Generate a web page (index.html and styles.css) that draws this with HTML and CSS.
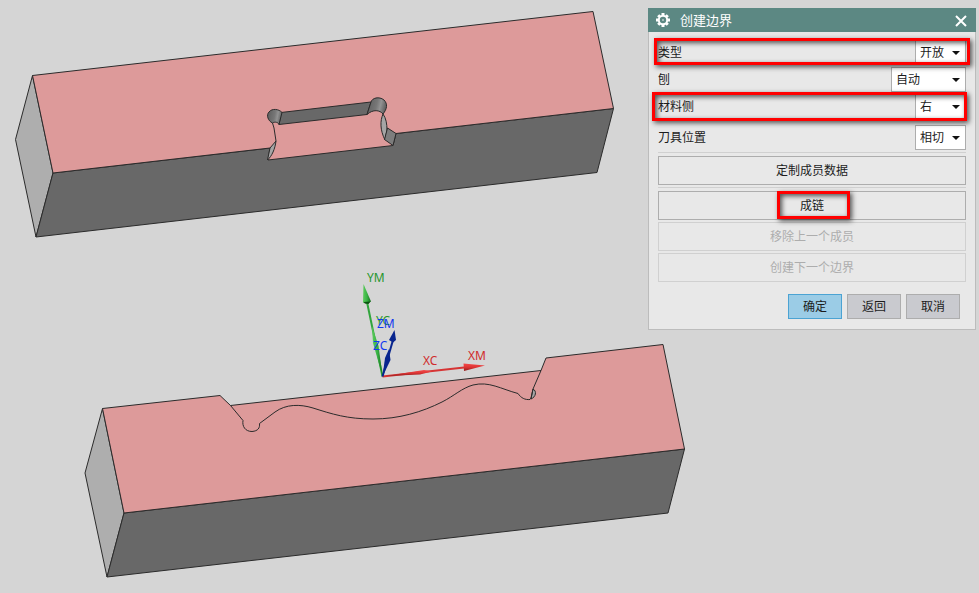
FILE: index.html
```html
<!DOCTYPE html>
<html lang="zh-CN">
<head>
<meta charset="utf-8">
<meta name="viewport" content="width=device-width, initial-scale=1">
<title>创建边界</title>
<link rel="stylesheet" href="styles.css">
</head>
<body>
<main class="workspace">
  <svg class="viewport" viewBox="0 0 979 593" preserveAspectRatio="xMinYMin meet" aria-hidden="true">
    <defs>
      <linearGradient id="bore" x1="0" x2="1" y1="0" y2="0.2">
        <stop offset="0" stop-color="#5c5c5c"/><stop offset=".55" stop-color="#777"/><stop offset=".75" stop-color="#929292"/><stop offset="1" stop-color="#656565"/>
      </linearGradient>
      <linearGradient id="green" x1="0" x2="1"><stop offset="0" stop-color="#5ccb5c"/><stop offset=".5" stop-color="#38b344"/><stop offset="1" stop-color="#146b1a"/></linearGradient>
      <linearGradient id="red" x1="0" x2="0" y1="0" y2="1"><stop offset="0" stop-color="#f34a4a"/><stop offset=".5" stop-color="#df3434"/><stop offset="1" stop-color="#8e1d1d"/></linearGradient>
    </defs>

    <!-- upper block -->
    <g class="solid">
      <path class="end" d="M32.500 75.500 15.500 139.500 36 237 53 173Z"/>
      <path class="side" d="M53 173 613.500 108.500 597 172.500 36 237Z"/>
      <path class="top" d="M32.500 75.500 593 11.500 613.500 108.500 396 133.500 393 145.500 268 160 270 148 53 173Z"/>
      <path class="wall" d="M281 112.500 371 102 367 114.500 279 124.500Z"/>
      <path class="bore" d="M279 124.500C278 122 275 121.500 272.500 123 268 121 266 115 269 112 272 108 279 109 282 112.500Z"/>
      <path class="bore" d="M367 114.500 371 102C372 98 379 96 384 100 388 104 387 109 383 114 380 110 373 109 367 114.500Z"/>
      <path class="light" d="M383 114C386 118 387 124 387 130L385 140C380 130 380 121 383 114Z"/>
      <path class="face" d="M387.500 128 396 133.500 393 145.500 384.500 139.500Z"/>
      <path class="light" d="M270 148 276 141C275 149 272 156 267.500 160Z"/>
      <path class="line" d="M272.500 123 274 128 276 141"/>
    </g>

    <!-- lower block -->
    <g class="solid">
      <path class="end" d="M102.500 408.500 85 473 107 577 124 513Z"/>
      <path class="side" d="M124 513 684.500 449 668 513 107 577Z"/>
      <path class="top" d="M102.500 408.500 220 395.500 230.500 405.500 541 370.500 546 358 663 344.500 684.500 449 124 513Z"/>
      <path class="light" d="M533 389C537 391 536 397 531 399Z"/>
      <path class="line" d="M230.500 405.500 243 420.500C242 426 245 431.500 252 431.500 258 431 260 428 259.500 423.500L275 412C286 404 300 404 313 408 332 414 347 419 373 419 399 419 422 412 442 402 454 396 462 388 473 385 489 381 501 389 518 393.500 521 398 525 400 530 399.500L531 398 533 389 541 370.500"/>
    </g>

    <!-- work and machine coordinate axes -->
    <g class="axes">
      <text class="y-label" x="376" y="325">YC</text>
      <path class="y-stem" d="M367 302 382.500 376.500"/>
      <path fill="url(#green)" d="M363.500 284 371 301.500 367 304 363 302.500Z"/>
      <path class="y-cap" d="M363.500 302 370.500 301.500 368.500 304 365 303.500Z"/>
      <path fill="url(#green)" d="M372 326 378.500 346 382.500 376 373 343Z"/>
      <path class="x-stem" d="M382.500 376.500 464 367.500"/>
      <path fill="url(#red)" d="M386 376 424 370 432 371.500 420 374.500Z"/>
      <path fill="url(#red)" d="M463.500 363.500 485 365.500 464 371Z"/>
      <path class="z-stem" d="M382.500 376.500 393 340"/>
      <path class="z-head" d="M394.500 330 396 340 393 342.500 389 340Z"/>
      <path class="z-head" d="M389 349 390.500 360 382.500 376.500 385 358Z"/>
      <text class="y-label" x="367" y="282">YM</text>
      <text class="z-label" x="377" y="328">ZM</text>
      <text class="z-label" x="373" y="350">ZC</text>
      <text class="x-label" x="423" y="365">XC</text>
      <text class="x-label" x="468" y="360">XM</text>
    </g>
  </svg>

  <form class="dialog" role="dialog" aria-labelledby="dialog-title">
    <header class="titlebar">
      <svg class="gear" viewBox="0 0 16 16" aria-hidden="true">
        <circle class="gear-ring" cx="8" cy="8" r="4.200"/>
        <path class="gear-teeth" d="M8 1V3.500M8 12.500V15M1 8H3.500M12.500 8H15M3.200 3.200 4.800 4.800M11.200 11.200 12.800 12.800M3.200 12.800 4.800 11.200M11.200 4.800 12.800 3.200"/>
        <circle class="gear-hub" cx="8" cy="8" r="1"/>
      </svg>
      <h1 class="title" id="dialog-title">创建边界</h1>
      <button class="close" type="button" aria-label="关闭">
        <svg viewBox="0 0 12 12" aria-hidden="true"><path d="M1 1 11 11M11 1 1 11"/></svg>
      </button>
    </header>
    <div class="content">
      <div class="fields">
        <div class="field marked marked-type">
          <label for="type">类型</label>
          <span class="picker"><select id="type"><option>开放</option></select></span>
        </div>
        <div class="field">
          <label for="plane">刨</label>
          <span class="picker picker-wide"><select id="plane"><option>自动</option></select></span>
        </div>
        <div class="field marked marked-side">
          <label for="side">材料侧</label>
          <span class="picker"><select id="side"><option>右</option></select></span>
        </div>
      </div>
      <div class="field">
        <label for="tool">刀具位置</label>
        <span class="picker"><select id="tool"><option>相切</option></select></span>
      </div>
      <div class="actions">
        <button class="action" type="button">定制成员数据</button>
      </div>
      <div class="actions">
        <button class="action marked marked-chain" type="button">成链</button>
        <button class="action" type="button" disabled>移除上一个成员</button>
        <button class="action" type="button" disabled>创建下一个边界</button>
      </div>
      <footer class="footer">
        <button class="command primary" type="button">确定</button>
        <button class="command" type="button">返回</button>
        <button class="command" type="button">取消</button>
      </footer>
    </div>
  </form>
</main>
</body>
</html>
```
FILE: styles.css
```css
* { box-sizing: border-box; }

body {
  margin: 0;
  background: #d5d5d5;
  color: #1c1c1c;
  font: 12px/16px "Noto Sans", "Noto Sans CJK SC", sans-serif;
}

button, select { font: inherit; color: inherit; }

.workspace { position: relative; min-height: 100vh; overflow: hidden; }
.viewport { display: block; width: 100%; height: 100vh; }

/* Model */
.solid { stroke: #2b2b2b; stroke-width: 1; stroke-linejoin: round; }
.top { fill: #dd9a9a; }
.side, .wall { fill: #686868; }
.end { fill: #aeaeae; }
.bore { fill: url(#bore); }
.light { fill: #a5a5a5; }
.face { fill: #7d7d7d; }
.line { fill: none; }

/* Axes */
.axes { font: 12px "Noto Sans", sans-serif; }
.y-stem, .x-stem, .z-stem { fill: none; stroke-width: 2; }
.y-stem { stroke: #31a53c; }
.x-stem { stroke: #d63434; }
.z-stem { stroke: #08258e; }
.y-cap { fill: #0c5312; }
.z-head { fill: #08258e; }
.y-label { fill: #27952d; }
.x-label { fill: #d02c2c; }
.z-label { fill: #1238f0; }

/* Dialog */
.dialog {
  position: absolute;
  top: 8px;
  right: 3px;
  width: 328px;
  background: #e8e8e8;
}
.titlebar {
  display: flex;
  align-items: center;
  gap: 9px;
  height: 24px;
  padding: 0 9px 0 7px;
  background: #5c8883;
  color: #fff;
}
.gear { width: 16px; height: 16px; fill: none; stroke: #fff; }
.gear-ring { stroke-width: 2; }
.gear-teeth { stroke-width: 3; }
.gear-hub { fill: #fff; stroke: none; opacity: .6; }
.title { flex: 1; margin: 0; font-size: 13px; font-weight: 400; }
.close {
  display: flex;
  padding: 2px 0 0;
  border: 0;
  background: none;
}
.close svg { width: 12px; height: 12px; fill: none; stroke: #fff; stroke-width: 2; }

.content { padding: 8px 9px 10px; border: 1px solid #bcbcbc; border-top: 0; }
.fields { display: grid; gap: 2px; margin-bottom: 6px; }
.field { display: flex; align-items: center; justify-content: space-between; height: 25px; }

.picker { position: relative; width: 51px; height: 25px; }
.picker-wide { width: 75px; }
.picker select {
  appearance: none;
  width: 100%;
  height: 100%;
  padding: 0 0 0 4px;
  border: 1px solid #adadad;
  border-radius: 0;
  background: #fff;
}
.picker::after {
  content: "";
  position: absolute;
  top: 11px;
  right: 6px;
  border: 4px solid transparent;
  border-top-color: #111;
  border-bottom: 0;
  pointer-events: none;
}

.actions {
  display: grid;
  gap: 2px;
  margin-top: 2px;
  padding-top: 3px;
  border-top: 1px solid #d0d0d0;
}
.action { height: 29px; padding: 0; border: 1px solid #adadad; background: #e8e8e8; }
.action:disabled { border-color: #d0d0d0; color: #adadad; }

.footer { display: flex; justify-content: flex-end; gap: 5px; margin-top: 12px; padding-right: 6px; }
.command { width: 54px; height: 25px; padding: 0; border: 1px solid #adadad; background: #c9cacf; }
.primary { border-color: #4ba3d3; background: #9bcce6; }

/* Red callouts drawn over the controls */
.marked { position: relative; }
.marked::after {
  content: "";
  position: absolute;
  z-index: 1;
  border: 3px solid #f00;
  box-shadow: 2px 2px 5px rgba(0, 0, 0, .65), inset 2px 2px 5px rgba(0, 0, 0, .65);
  pointer-events: none;
}
.marked-type::after { inset: -2px -4px 0; }
.marked-side::after { inset: -2px -1px -2px -6px; }
.marked-chain::after { inset: -1px 115px 0 118px; }
```
